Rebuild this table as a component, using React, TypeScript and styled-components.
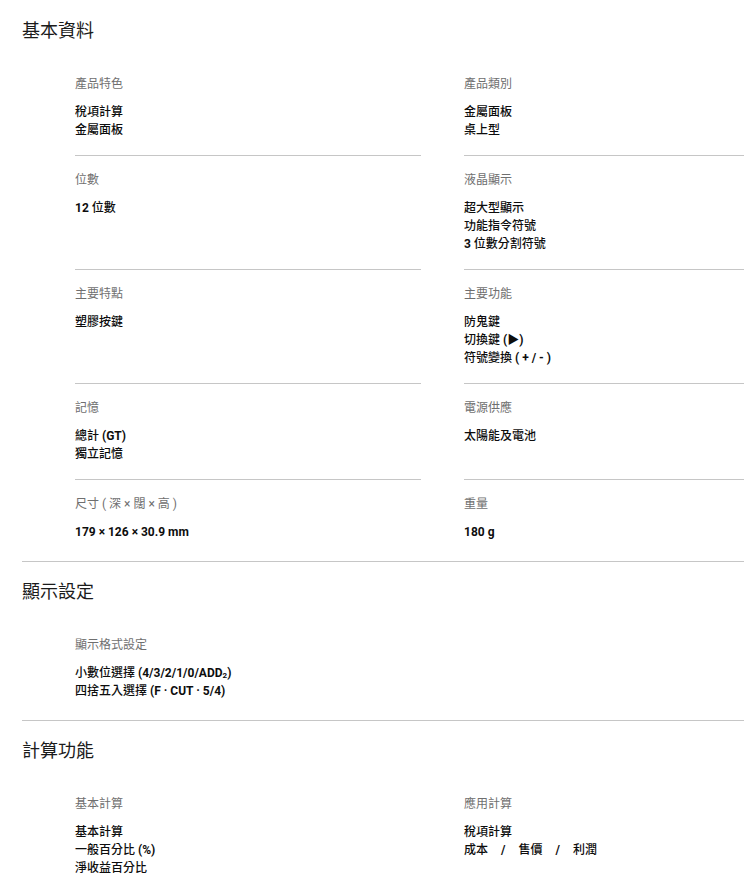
import React from "react";
import styled, { createGlobalStyle } from "styled-components";

const GlobalStyle = createGlobalStyle`
  html, body {
    margin: 0;
    padding: 0;
    background: #ffffff;
  }
  body {
    font-family: Roboto, "Noto Sans CJK TC", "Noto Sans", sans-serif;
    color: #111111;
    overflow: hidden;
  }
`;

interface Spec {
  label: React.ReactNode;
  values: React.ReactNode[];
}

interface SectionData {
  title: string;
  specs: Spec[];
}

const Page = styled.div`
  width: 744px;
`;

const Section = styled.section<{ $first?: boolean }>`
  margin-left: 22px;
  padding-top: 17px;
  border-top: 1px solid ${({ $first }) => ($first ? "transparent" : "#c6c6c6")};
`;

const SectionTitle = styled.h2`
  margin: 0 0 16px;
  font-size: 18px;
  line-height: 26px;
  font-weight: 400;
  color: #1b1b1b;
`;

const SpecGrid = styled.div`
  display: grid;
  grid-template-columns: 346px 1fr;
  column-gap: 43px;
  padding-left: 53px;
`;

const Cell = styled.div<{ $last?: boolean }>`
  padding: 15px 0 ${({ $last }) => ($last ? "19px" : "16px")};
  border-bottom: 1px solid ${({ $last }) => ($last ? "transparent" : "#c6c6c6")};
`;

const Label = styled.div`
  height: 18px;
  font-size: 12px;
  line-height: 18px;
  color: #6f6f6f;
  margin-bottom: 10px;
`;

const Value = styled.div`
  height: 18px;
  font-size: 12px;
  line-height: 18px;
  font-weight: 500;
  color: #0d0d0d;
  white-space: nowrap;
`;

// latin runs (digits, units) are set heavier than the CJK text around them
const Latin = styled.span`
  font-weight: 700;
`;

const Sep = styled.span`
  margin: 0 13px;
  font-weight: 700;
`;

const Sub = styled.span`
  font-size: 8px;
  line-height: 0;
  vertical-align: -1px;
`;

const sections: SectionData[] = [
  {
    title: "基本資料",
    specs: [
      { label: "產品特色", values: ["稅項計算", "金屬面板"] },
      { label: "產品類別", values: ["金屬面板", "桌上型"] },
      { label: "位數", values: [<><Latin>12</Latin> 位數</>] },
      {
        label: "液晶顯示",
        values: ["超大型顯示", "功能指令符號", <><Latin>3</Latin> 位數分割符號</>],
      },
      { label: "主要特點", values: ["塑膠按鍵"] },
      {
        label: "主要功能",
        values: ["防鬼鍵", <>切換鍵 <Latin>(▶)</Latin></>, <>符號變換 <Latin>( + / - )</Latin></>],
      },
      { label: "記憶", values: [<>總計 <Latin>(GT)</Latin></>, "獨立記憶"] },
      { label: "電源供應", values: ["太陽能及電池"] },
      { label: "尺寸 ( 深 × 闊 × 高 )", values: [<Latin>179 × 126 × 30.9 mm</Latin>] },
      { label: "重量", values: [<Latin>180 g</Latin>] },
    ],
  },
  {
    title: "顯示設定",
    specs: [
      {
        label: "顯示格式設定",
        values: [
          <>
            小數位選擇 <Latin>(4/3/2/1/0/ADD<Sub>2</Sub>)</Latin>
          </>,
          <>
            四捨五入選擇 <Latin>(F · CUT · 5/4)</Latin>
          </>,
        ],
      },
    ],
  },
  {
    title: "計算功能",
    specs: [
      {
        label: "基本計算",
        values: ["基本計算", <>一般百分比 <Latin>(%)</Latin></>, "淨收益百分比"],
      },
      {
        label: "應用計算",
        values: [
          "稅項計算",
          <>
            成本<Sep>/</Sep>售價<Sep>/</Sep>利潤
          </>,
        ],
      },
    ],
  },
];

export default function App() {
  return (
    <Page>
      <GlobalStyle />
      {sections.map((section, si) => {
        const rows = Math.ceil(section.specs.length / 2);
        return (
          <Section key={section.title} $first={si === 0}>
            <SectionTitle>{section.title}</SectionTitle>
            <SpecGrid>
              {section.specs.map((spec, i) => (
                <Cell key={i} $last={Math.floor(i / 2) === rows - 1}>
                  <Label>{spec.label}</Label>
                  {spec.values.map((v, vi) => (
                    <Value key={vi}>{v}</Value>
                  ))}
                </Cell>
              ))}
            </SpecGrid>
          </Section>
        );
      })}
    </Page>
  );
}
